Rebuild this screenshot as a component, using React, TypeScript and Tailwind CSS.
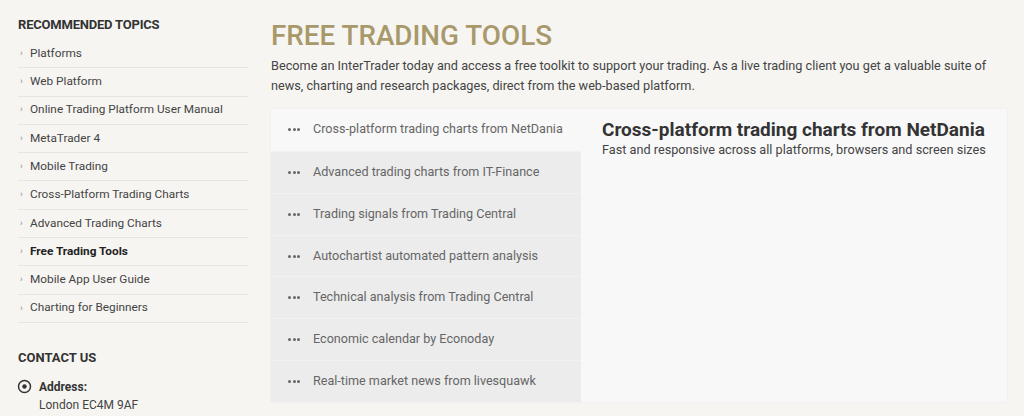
const topics = [
  "Platforms",
  "Web Platform",
  "Online Trading Platform User Manual",
  "MetaTrader 4",
  "Mobile Trading",
  "Cross-Platform Trading Charts",
  "Advanced Trading Charts",
  "Free Trading Tools",
  "Mobile App User Guide",
  "Charting for Beginners",
];

const tools = [
  "Cross-platform trading charts from NetDania",
  "Advanced trading charts from IT-Finance",
  "Trading signals from Trading Central",
  "Autochartist automated pattern analysis",
  "Technical analysis from Trading Central",
  "Economic calendar by Econoday",
  "Real-time market news from livesquawk",
];

function Dots() {
  return (
    <span className="flex gap-[1.5px] w-[12px] shrink-0">
      <span className="w-[3px] h-[3px] rounded-full bg-[#666]" />
      <span className="w-[3px] h-[3px] rounded-full bg-[#666]" />
      <span className="w-[3px] h-[3px] rounded-full bg-[#666]" />
    </span>
  );
}

export default function App() {
  const active = 0;
  return (
    <div className="w-[1024px] h-[416px] overflow-hidden bg-[#f6f5f2] flex font-['Roboto',sans-serif]">
      <aside className="w-[271px] shrink-0 pl-[18px] pr-[23px] pt-[17px]">
        <h3 className="text-[13px] font-bold text-[#333] leading-[16px] tracking-[-0.2px]">
          RECOMMENDED TOPICS
        </h3>
        <ul className="mt-[7px]">
          {topics.map((t) => (
            <li
              key={t}
              className="h-[28.3px] flex items-center border-b border-[#e6e5e1] text-[11.8px] text-[#444]"
            >
              <span className="text-[9px] text-[#888] w-[12px] pl-[2px]">›</span>
              <span className={t === "Free Trading Tools" ? "font-bold text-[#222]" : ""}>{t}</span>
            </li>
          ))}
        </ul>
        <h3 className="mt-[27px] text-[13px] font-bold text-[#333] leading-[16px]">CONTACT US</h3>
        <div className="mt-[12px] flex gap-[7px]">
          <svg width="15" height="15" viewBox="0 0 15 15" className="mt-[1px] -ml-[1px]">
            <circle cx="7.5" cy="7.5" r="6" fill="none" stroke="#333" strokeWidth="1.5" />
            <circle cx="7.5" cy="7.5" r="2.2" fill="#333" />
          </svg>
          <div className="text-[12px] leading-[18px]">
            <div className="font-bold text-[#333]">Address:</div>
            <div className="text-[#444]">London EC4M 9AF</div>
          </div>
        </div>
      </aside>
      <main className="flex-1 pr-[17px] pt-[19px]">
        <h1 className="text-[27.8px] leading-[34px] text-[#a8996b] font-medium">
          FREE TRADING TOOLS
        </h1>
        <p className="mt-[3px] text-[12.7px] leading-[20px] text-[#444]">
          Become an InterTrader today and access a free toolkit to support your trading. As a live trading client
          you get a valuable suite of news, charting and research packages, direct from the web-based platform.
        </p>
        <div className="mt-[13px] flex bg-[#f8f8f8] h-[293px] shadow-[0_0_2px_rgba(0,0,0,0.06)]">
          <ul className="w-[310px] shrink-0 flex flex-col">
            {tools.map((t, i) => (
              <li
                key={t}
                className={
                  "h-[42px] flex items-center gap-[13px] pl-[17px] text-[12.6px] text-[#666] " +
                  (i === active ? "bg-[#f8f8f8]" : "bg-[#ececec] border-t border-[#f1f1f1]")
                }
              >
                <Dots />
                <span>{t}</span>
              </li>
            ))}
          </ul>
          <div className="flex-1 pl-[21px] pt-[9px]">
            <h2 className="text-[19px] font-bold text-[#333] leading-[23px]">
              Cross-platform trading charts from NetDania
            </h2>
            <p className="text-[12.7px] text-[#444] leading-[18px] mt-[0px]">
              Fast and responsive across all platforms, browsers and screen sizes
            </p>
          </div>
        </div>
      </main>
    </div>
  );
}
